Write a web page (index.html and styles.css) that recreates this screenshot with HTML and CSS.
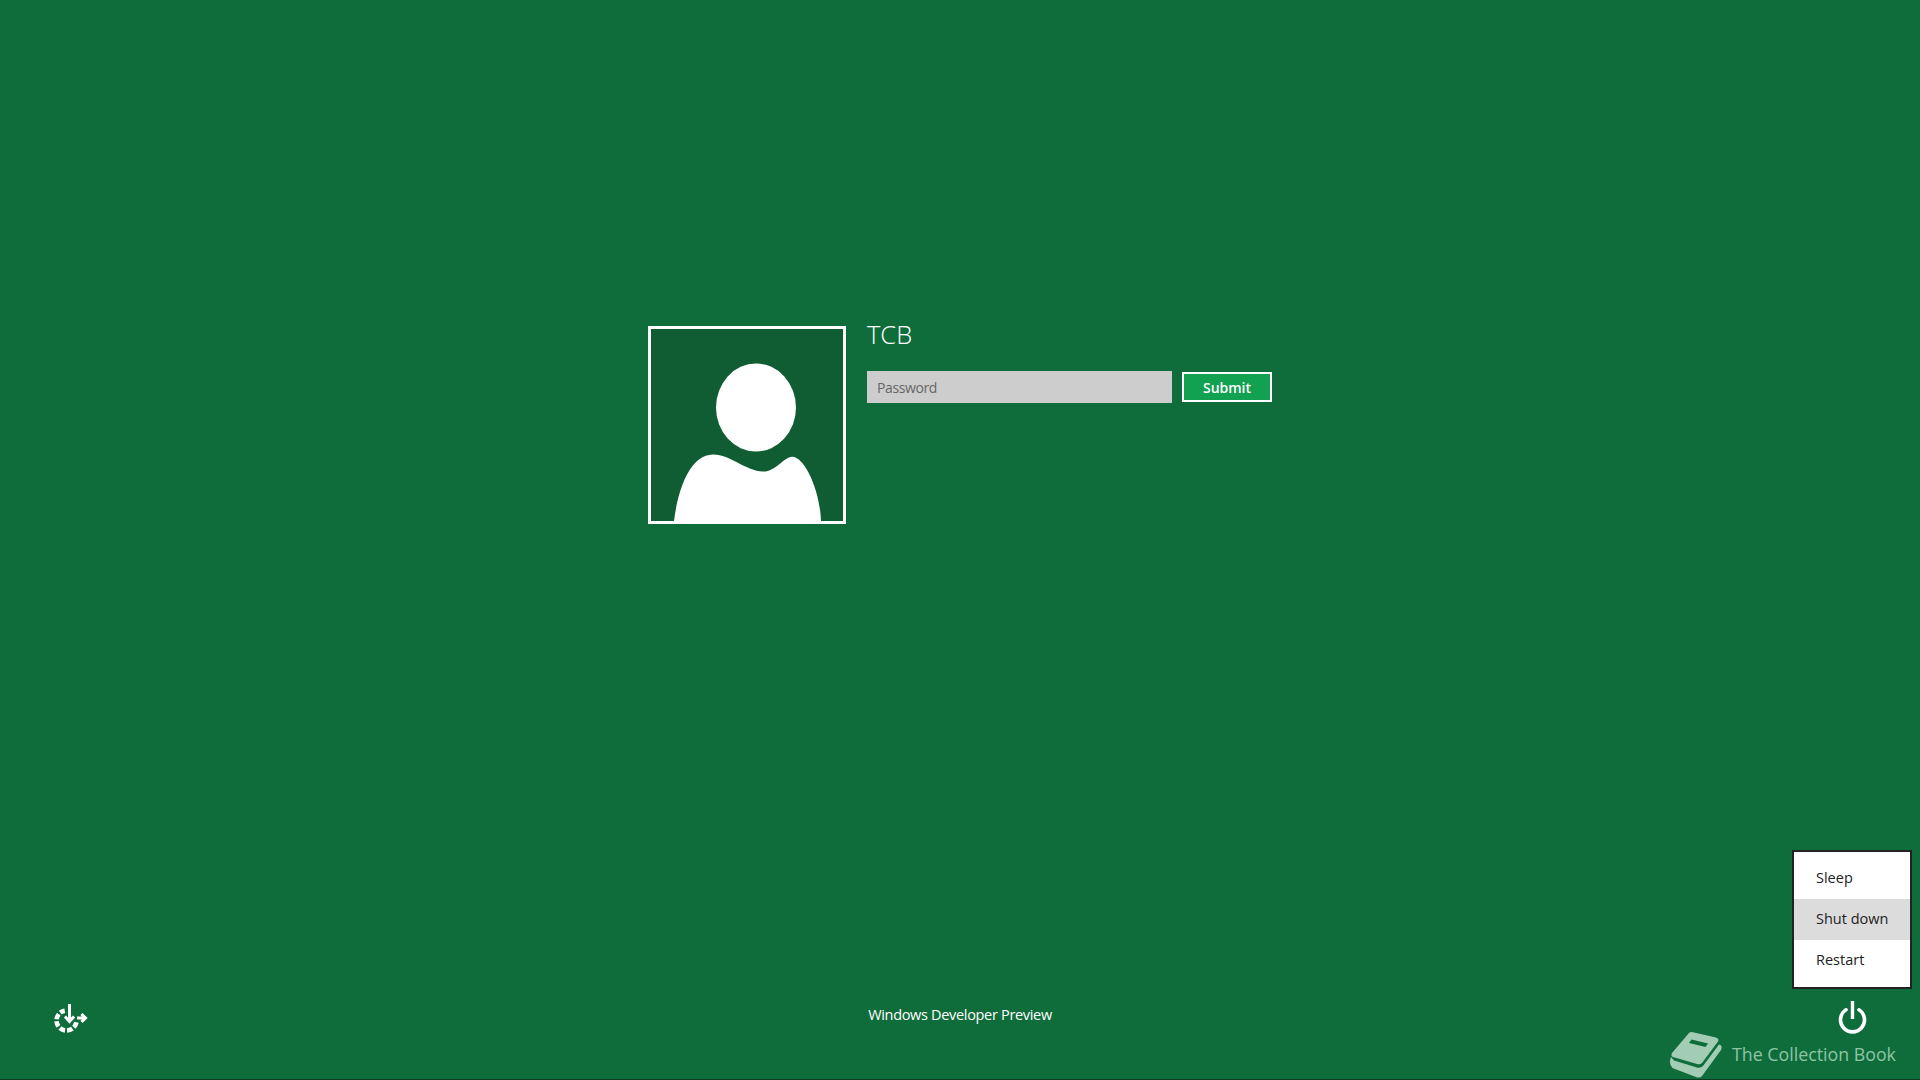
FILE: index.html
```html
<!DOCTYPE html>
<html lang="en">
<head>
<meta charset="utf-8">
<title>Sign in</title>
<link rel="stylesheet" href="styles.css">
</head>
<body>
<div class="screen">
  <main class="login">
    <div class="avatar">
      <svg class="avatar-art" viewBox="0 0 192 192" aria-hidden="true">
        <ellipse cx="105" cy="78.500" rx="40" ry="44" fill="#fff"/>
        <path fill="#fff" d="M23 192C27 160 39 126 62 125.500C78 125 95 142 112 142.500C124 143 133 128 141 127.700C153 127 169 160 170 192Z"/>
      </svg>
    </div>
    <div class="credentials">
      <div class="username">TCB</div>
      <div class="password-row">
        <div class="password">Password</div>
        <button class="submit" type="button">Submit</button>
      </div>
    </div>
  </main>
  <footer class="footer">
    <svg class="ease-icon" viewBox="0 0 40 40" aria-hidden="true">
      <path fill="none" stroke="#fff" stroke-width="4.600" stroke-dasharray="5.600 2.100" d="M28.350 24.240A10 10 0 1 1 16.760 12.650"/>
      <path fill="none" stroke="#fff" stroke-width="3" d="M21.500 6V23M17 18.500L21.500 23.500L26 18.500M29 20H37M33.500 16L37.500 20L33.500 24"/>
    </svg>
    <div class="edition">Windows Developer Preview</div>
    <svg class="power-icon" viewBox="0 0 45 45" aria-hidden="true">
      <path fill="none" stroke="#fff" stroke-width="3.600" stroke-linecap="round" d="M16 14.800A12 12 0 1 0 29 14.800"/>
      <path fill="none" stroke="#fff" stroke-width="3.400" d="M22.500 6V24"/>
    </svg>
  </footer>
  <div class="power-menu">
    <div class="menu-item">Sleep</div>
    <div class="menu-item menu-item-active">Shut down</div>
    <div class="menu-item">Restart</div>
  </div>
  <div class="watermark">
    <svg class="book" viewBox="0 0 60 55" aria-hidden="true">
      <path fill="#a3ccb4" d="M25 8Q27 6.500 30 7.500L52 12.500Q55.500 13.500 54 16.500L38 38Q36 40 33 39L9 32Q6.500 31 8 28Z"/>
      <path fill="#0f6d3b" d="M27.500 14.500L44 18.500L41.500 22L25 18Z"/>
      <path fill="#a3ccb4" d="M7 32Q5 36 6.500 40Q7.500 43 11 44L32 52Q36 53.500 38 51L57 25Q58.500 22 56.500 20L55 19.500L39 41Q36.500 43.500 33 42.500L10 35.500Z"/>
    </svg>
    <span class="watermark-text">The Collection Book</span>
  </div>
  <div class="bottom-line"></div>
</div>
</body>
</html>
```
FILE: styles.css
```css
html, body {
  margin: 0;
  padding: 0;
  height: 100%;
}
body {
  background: #0f6d3b;
  font-family: "Open Sans", "Noto Sans", sans-serif;
  overflow: hidden;
}
.screen {
  position: relative;
  width: 1920px;
  height: 1080px;
  display: flex;
  flex-direction: column;
  justify-content: space-between;
  box-sizing: border-box;
  background: #0f6d3b;
}
.login {
  display: flex;
  align-items: flex-start;
  padding: 326px 0 0 648px;
}
.avatar {
  width: 192px;
  height: 192px;
  border: 3px solid #fff;
  background: #105d33;
}
.avatar-art {
  display: block;
  width: 192px;
  height: 192px;
}
.credentials {
  margin-left: 21px;
}
.username {
  color: #fff;
  font-size: 25.500px;
  font-weight: 300;
  line-height: 36px;
  margin-top: -10px;
}
.password-row {
  display: flex;
  align-items: center;
  margin-top: 19px;
  gap: 10px;
}
.password {
  width: 305px;
  height: 32px;
  box-sizing: border-box;
  padding-left: 10px;
  background: #cdcdcd;
  color: #666;
  font-size: 14px;
  letter-spacing: -0.400px;
  line-height: 34px;
}
.submit {
  width: 90px;
  height: 30px;
  box-sizing: border-box;
  padding: 1px 0 0;
  border: 2px solid #fff;
  background: #12a150;
  color: #fff;
  font-family: inherit;
  font-size: 14px;
  font-weight: 600;
  line-height: 26px;
}
.footer {
  display: grid;
  grid-template-columns: 1fr auto 1fr;
  align-items: center;
  height: 44px;
  padding: 0 45px 40px;
}
.ease-icon {
  display: block;
  width: 40px;
  height: 40px;
  margin-left: 3px;
}
.edition {
  color: #fff;
  font-size: 14.500px;
  line-height: 20px;
  margin-top: -7px;
  letter-spacing: -0.320px;
}
.power-icon {
  display: block;
  width: 45px;
  height: 45px;
  margin-top: -2px;
  justify-self: end;
}
.power-menu {
  position: absolute;
  left: 1792px;
  top: 850px;
  width: 120px;
  height: 139px;
  box-sizing: border-box;
  border: 2px solid #222;
  background: #fff;
  padding: 6px 0;
}
.menu-item {
  height: 41px;
  padding-left: 22px;
  color: #222;
  font-size: 14.500px;
  line-height: 40px;
}
.menu-item-active {
  background: #dcdcdc;
}
.watermark {
  position: absolute;
  left: 1664px;
  top: 1025px;
  display: flex;
  align-items: flex-start;
}
.book {
  display: block;
  width: 60px;
  height: 55px;
}
.watermark-text {
  margin: 17px 0 0 8px;
  color: #8ec5a4;
  font-size: 17.800px;
  line-height: 24px;
  font-weight: 400;
  white-space: nowrap;
}
.bottom-line {
  position: absolute;
  left: 0;
  right: 0;
  bottom: 0;
  height: 1px;
  background: #0c3a21;
}
```
